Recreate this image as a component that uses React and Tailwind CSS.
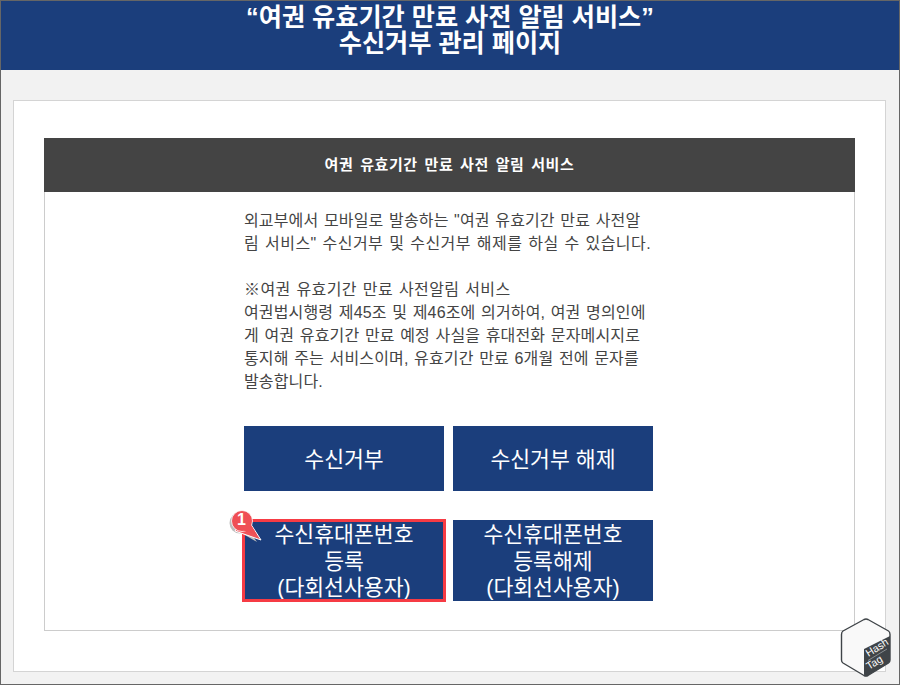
const FONT = 'font-["Liberation_Sans","Noto_Sans_CJK_KR",sans-serif]';

function Btn({ children }) {
  return (
    <div className="w-[200px] pt-[3px] bg-[#1b3e7c] text-white text-[21.6px] leading-[26.5px] text-center flex items-center justify-center">
      <span>{children}</span>
    </div>
  );
}

export default function App() {
  return (
    <div className={`relative w-[900px] h-[685px] overflow-hidden bg-[#f2f2f2] border-t border-l border-r border-b border-[#666666] ${FONT}`}>
      <header className="h-[69px] bg-[#1b3e7c] text-white text-center font-bold text-[25.2px] leading-[26px] pt-[3px]">
        <div>“여권 유효기간 만료 사전 알림 서비스”</div>
        <div>수신거부 관리 페이지</div>
      </header>
      <main className="mt-[30px] ml-[12px] mr-[13px] h-[572px] bg-white border border-[#d4d4d4] px-[30px] pt-[37px]">
        <div className="h-[493px] border-l border-r border-b border-[#cccccc] flex flex-col">
          <div className="h-[54px] -mx-[1px] bg-[#444444] text-white text-[15px] tracking-[0.6px] [word-spacing:2px] font-bold flex items-center justify-center">
            여권 유효기간 만료 사전 알림 서비스
          </div>
          <div className="w-[412px] ml-[199px] pt-[17px] text-[16px] leading-[23px] tracking-[0.15px] [word-spacing:1px] text-[#444444] whitespace-nowrap">
            <p>외교부에서 모바일로 발송하는 "여권 유효기간 만료 사전알<br /><span className="tracking-[0.45px]">림 서비스" 수신거부 및 수신거부 해제를 하실 수 있습니다.</span></p>
            <p className="mt-[23px]"><span className="tracking-[0.4px]">※여권 유효기간 만료 사전알림 서비스</span><br />여권법시행령 제45조 및 제46조에 의거하여, 여권 명의인에<br />게 여권 유효기간 만료 예정 사실을 휴대전화 문자메시지로<br />통지해 주는 서비스이며, 유효기간 만료 6개월 전에 문자를<br />발송합니다.</p>
          </div>
          <div className="ml-[199px] mt-[33px] flex gap-[9px] h-[65px]">
            <Btn>수신거부</Btn>
            <Btn>수신거부 해제</Btn>
          </div>
          <div className="ml-[199px] mt-[29px] flex gap-[9px] h-[81px]">
            <Btn>수신휴대폰번호<br />등록<br />(다회선사용자)</Btn>
            <Btn>수신휴대폰번호<br />등록해제<br />(다회선사용자)</Btn>
          </div>
        </div>
      </main>

      {/* annotation: red highlight */}
      <div className="absolute left-[241px] top-[518px] w-[204px] h-[83px] border-[3px] border-[#f63b44]" />
      <svg className="absolute left-[226px] top-[506px]" width="40" height="38" viewBox="0 0 40 38">
        <path d="M13 22 L32 33 L23 20 Z" fill="#bdbdbd" transform="translate(-2 2)" />
        <circle cx="13" cy="16" r="10.5" fill="#bdbdbd" />
        <path d="M18 8 L34 33 L8 24 Z" fill="#f0545a" stroke="#ffffff" strokeWidth="1" strokeLinejoin="round" />
        <circle cx="15" cy="14" r="10.5" fill="#ef4f55" stroke="#ffffff" strokeWidth="0.8" />
        <path d="M18 8 L30 28 L12 22 Z" fill="#ef4f55" />
      </svg>
      <span className="absolute left-[236px] top-[508px] text-white font-bold text-[16px] leading-[22px]">1</span>

      {/* HashTag sticker */}
      <svg className="absolute left-[838px] top-[615px]" width="54" height="63" viewBox="0 0 54 63">
        <path d="M25 3.5 Q27 2.5 29 3.5 L49.5 15 Q51 16 51 18.5 L51 44 Q51 46 49.5 47 L29 59.5 Q27 60.5 25 59.5 L4 47 Q2.5 46 2.5 44 L2.5 18.5 Q2.5 16 4 15 Z" fill="#f9f9f9" stroke="#3f4448" strokeWidth="1.4" />
        <path d="M25 33 L51 20 L51 44 Q51 46 49.5 47 L29 59.5 Q27 60.5 26 60 Q25 60 25 58 Z" fill="#3f4448" />
        <text transform="translate(29.5 41) rotate(-32)" fill="#ffffff" fontSize="10.5" fontFamily="Liberation Sans">Hash</text>
        <path d="M29 44.5 L48 33" stroke="#9aa0a3" strokeWidth="0.8" />
        <text transform="translate(30 54) rotate(-32)" fill="#ffffff" fontSize="10.5" fontFamily="Liberation Sans">Tag</text>
      </svg>
    </div>
  );
}
